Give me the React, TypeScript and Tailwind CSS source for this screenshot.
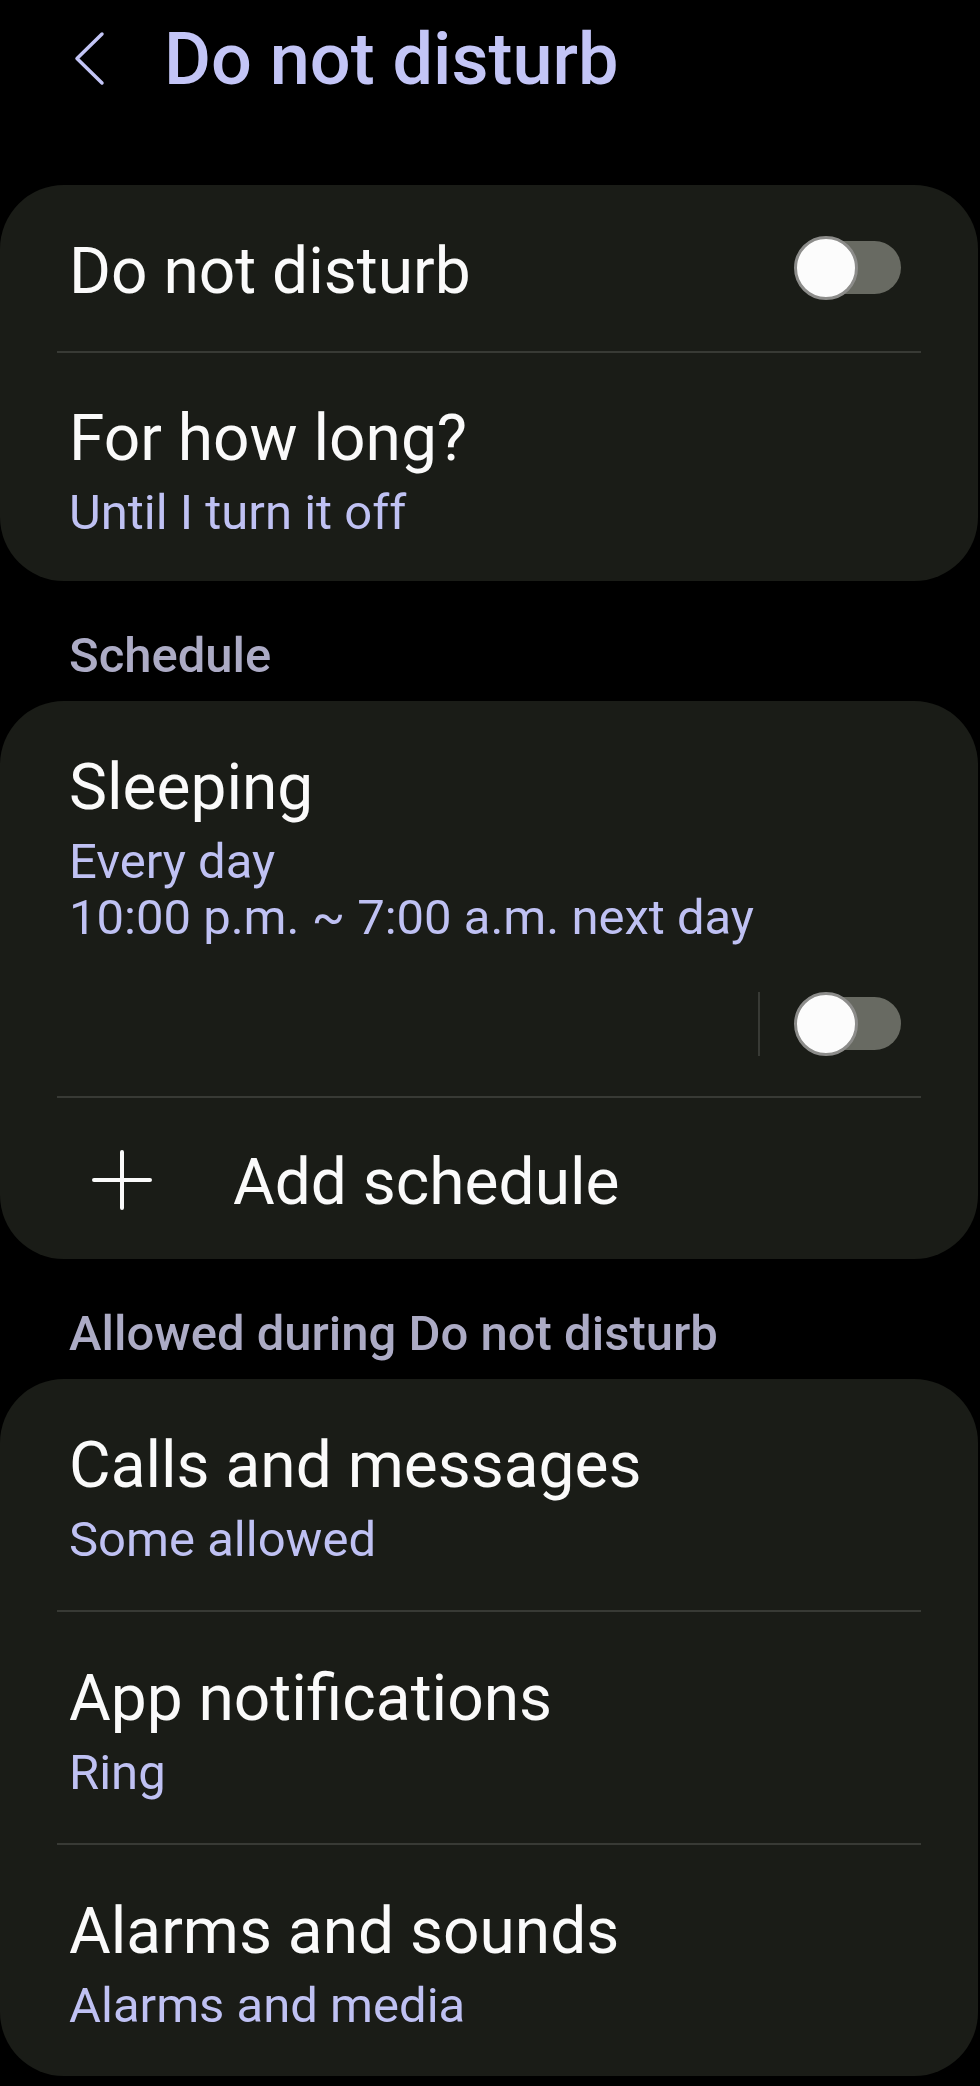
import React from 'react'

const font = { fontFamily: 'Roboto, "Noto Sans", "Liberation Sans", sans-serif' }

function Toggle() {
  return (
    <div className="relative w-[107px] h-[64px] shrink-0">
      <div className="absolute right-0 top-[5px] h-[53px] w-[92px] rounded-full bg-[#686a62]" />
      <div className="absolute left-0 top-0 w-[64px] h-[64px] rounded-full bg-[#fcfcfc] border-[3px] border-[#8c8c8a]" />
    </div>
  )
}

function Divider() {
  return <div className="mx-[57px] h-[2px] bg-[#383a35]" />
}

function Card({ children }: { children: React.ReactNode }) {
  return <div className="mr-[2px] rounded-[64px] bg-[#1a1c17] overflow-hidden">{children}</div>
}

function SectionTitle({ children }: { children: React.ReactNode }) {
  return (
    <div className="pt-[45px] pb-[15px] pl-[69px] text-[49px] leading-[60px] font-medium text-[#acabc5]">
      {children}
    </div>
  )
}

function Row({ title, sub }: { title: string; sub?: string[] }) {
  return (
    <div className="pl-[69px] pr-[77px] pt-[47px] pb-[42px]">
      <div className="text-[64px] leading-[80px] text-[#fafafa]">{title}</div>
      {sub && (
        <div className="mt-[6px] text-[49px] leading-[56px] text-[#bfc1f3]">
          {sub.map(s => <div key={s}>{s}</div>)}
        </div>
      )}
    </div>
  )
}

export default function App() {
  return (
    <div className="min-h-screen bg-black pb-[11px]" style={font}>
      <div className="flex items-center h-[118px] pl-[74px] pt-[2px]">
        <svg width="32" height="56" viewBox="0 0 32 56" fill="none" className="-mt-[2px]">
          <path d="M28 3 L3 27.5 L28 52" stroke="#c3c5f6" strokeWidth="3.5" strokeLinecap="round" strokeLinejoin="round" />
        </svg>
        <h1 className="ml-[58px] text-[72px] leading-[72px] font-medium text-[#c3c5f6]">Do not disturb</h1>
      </div>

      <div className="mt-[67px]">
        <Card>
          <div className="flex items-center justify-between pl-[69px] pr-[77px] pt-[43px] pb-[43px]">
            <div className="text-[64px] leading-[80px] text-[#fafafa] mt-[4px] -mb-[4px]">Do not disturb</div>
            <Toggle />
          </div>
          <Divider />
          <div className="pl-[69px] pr-[77px] pt-[46px] pb-[40px]">
            <div className="text-[64px] leading-[80px] text-[#fafafa]">For how long?</div>
            <div className="mt-[6px] text-[49px] leading-[56px] text-[#bfc1f3]">Until I turn it off</div>
          </div>
        </Card>
      </div>

      <SectionTitle>Schedule</SectionTitle>
      <Card>
        <div className="pl-[69px] pr-[77px] pt-[47px] pb-[40px]">
          <div className="text-[64px] leading-[80px] text-[#fafafa]">Sleeping</div>
          <div className="mt-[6px] text-[49px] leading-[56px] text-[#bfc1f3]">
            <div>Every day</div>
            <div>10:00 p.m. ~ 7:00 a.m. next day</div>
          </div>
          <div className="mt-[46px] flex items-center justify-end">
            <div className="mr-[34px] h-[64px] w-[2px] bg-[#383a35]" />
            <Toggle />
          </div>
        </div>
        <Divider />
        <div className="flex items-center pl-[92px] pt-[42px] pb-[39px]">
          <svg width="60" height="60" viewBox="0 0 60 60" fill="none">
            <path d="M30 2 V58 M2 30 H58" stroke="#fafafa" strokeWidth="4" strokeLinecap="round" />
          </svg>
          <div className="ml-[81px] text-[64px] leading-[80px] text-[#fafafa] mt-[3px] -mb-[3px]">Add schedule</div>
        </div>
      </Card>

      <SectionTitle>Allowed during Do not disturb</SectionTitle>
      <Card>
        <Row title="Calls and messages" sub={['Some allowed']} />
        <Divider />
        <Row title="App notifications" sub={['Ring']} />
        <Divider />
        <Row title="Alarms and sounds" sub={['Alarms and media']} />
      </Card>
    </div>
  )
}
